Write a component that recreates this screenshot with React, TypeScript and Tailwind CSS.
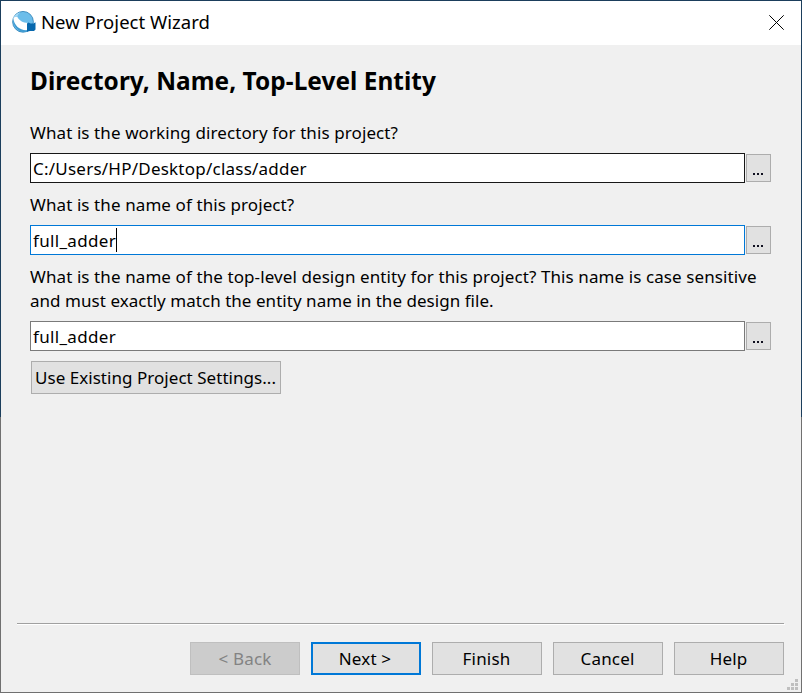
import type { ReactNode } from "react";

function AppIcon() {
  return (
    <svg viewBox="0 0 24 24" className="mr-[5px] size-6 shrink-0">
      <circle cx="11" cy="10.8" r="10.400" fill="#6cbdea" stroke="#2b7fb5" strokeWidth=".8" />
      <path d="M1 8C1.200 13 3.500 17.500 8 20C11 21.500 14 21 16.500 20V17.500C10 19 4 15 1 8Z" fill="#3f9bd2" />
      <path d="M1.300 6.500L5.200 5.500C7 9.600 11 11.900 16 11.900V19C9 20 2 15.500 1.300 6.500Z" fill="#fff" />
      <path d="M1.600 6.300Q4 2.300 8.500 1.300Q5.800 3 5.200 5.500Z" fill="#a9daf5" />
      <path d="M15 12.500L16.500 11.500L18.500 12.500H21.500L23.500 11.300V18.500L22 20H18L15 20.800Z" fill="#0768ad" />
    </svg>
  );
}

function Field({ value, look, caret = false }: { value: string; look: string; caret?: boolean }) {
  return (
    <div className="mt-2 flex h-[30px] w-[741px] items-center gap-px">
      <div className={`flex h-[30px] w-[715px] items-center border bg-white pl-[2px] ${look}`}>
        <span className="pt-px leading-6">{value}</span>
        {caret && <span className="h-6 w-px bg-black" />}
      </div>
      <button className="flex h-7 w-[25px] items-end justify-center gap-[2px] border border-[#adadad] bg-[#e1e1e1] pr-[2px] pb-[6px]">
        <span className="size-[2px] bg-[#101020]" />
        <span className="size-[2px] bg-[#101020]" />
        <span className="size-[2px] bg-[#101020]" />
      </button>
    </div>
  );
}

function WizardButton({ children, look }: { children: ReactNode; look: string }) {
  return (
    <button className={`flex h-[33px] w-[110px] items-center justify-center text-[17px] leading-6 tracking-[0.18px] ${look}`}>
      {children}
    </button>
  );
}

const normal = "border border-[#adadad] bg-[#e1e1e1] pr-px";

export default function App() {
  return (
    <div className="flex h-[693px] w-[802px] bg-[#707070] font-['Noto_Sans','Open_Sans',sans-serif] text-black">
      <div className="h-[417px] w-px bg-[#1b3e5c]" />
      <div className="flex h-[692px] w-[800px] flex-col border-t border-[#1b3e5c] bg-[#f0f0f0]">
        <header className="flex h-11 shrink-0 items-center bg-white pr-[17px] pl-[11px]">
          <AppIcon />
          <h1 className="mb-[2px] text-[18.5px] leading-6 tracking-[0.03px]">New Project Wizard</h1>
          <svg viewBox="0 0 15 15" className="mb-px ml-auto size-[15px]" stroke="#000" strokeWidth="1">
            <path d="M.3 .3L14.700 14.700M14.700 .3L.3 14.700" />
          </svg>
        </header>
        <main className="flex grow flex-col pl-[29px] text-[17px] leading-6 tracking-[0.095px]">
          <h2 className="mt-5 text-[24.4px] leading-8 font-bold tracking-[0.05px]">Directory, Name, Top-Level Entity</h2>
          <p className="mt-6">What is the working directory for this project?</p>
          <Field value="C:/Users/HP/Desktop/class/adder" look="border-[#171717] tracking-[0.23px]" />
          <p className="mt-[10px]">What is the name of this project?</p>
          <Field value="full_adder" look="border-[#0078d7] tracking-[0.33px]" caret />
          <p className="mt-[10px] whitespace-nowrap">
            What is the name of the top-level design entity for this project? This name is case sensitive
            <br />
            <span className="tracking-[0.04px]">and must exactly match the entity name in the design file.</span>
          </p>
          <Field value="full_adder" look="border-[#7a7a7a] tracking-[0.33px]" />
          <button className={`mt-[10px] ml-px flex h-[33px] w-[250px] items-center justify-center tracking-[0.04px] whitespace-nowrap ${normal}`}>
            Use Existing Project Settings...
          </button>
        </main>
        <footer className="relative mx-4 h-[69px] shrink-0">
          <div className="h-px w-[767px] bg-[#a0a0a0]" />
          <div className="h-px bg-white" />
          <div className="mt-[17px] flex w-[767px] justify-end gap-[11px]">
            <WizardButton look="border border-[#bfbfbf] bg-[#cccccc] text-[#838383]">&lt; Back</WizardButton>
            <WizardButton look="border-2 border-[#0078d7] bg-[#e1e1e1] pr-[2px]">Next &gt;</WizardButton>
            <WizardButton look={normal}>Finish</WizardButton>
            <WizardButton look={normal}>Cancel</WizardButton>
            <WizardButton look={normal}>Help</WizardButton>
          </div>
          <svg viewBox="0 0 11 11" className="absolute -right-[13px] bottom-[2px] size-[11px]" fill="#bfbfbf" shapeRendering="crispEdges">
            <path d="M8 0h3v3h-3zM4 4h3v3h-3zM8 4h3v3h-3zM0 8h3v3h-3zM4 8h3v3h-3zM8 8h3v3h-3z" />
          </svg>
        </footer>
      </div>
      <div className="h-[417px] w-px bg-[#1b3e5c]" />
    </div>
  );
}
